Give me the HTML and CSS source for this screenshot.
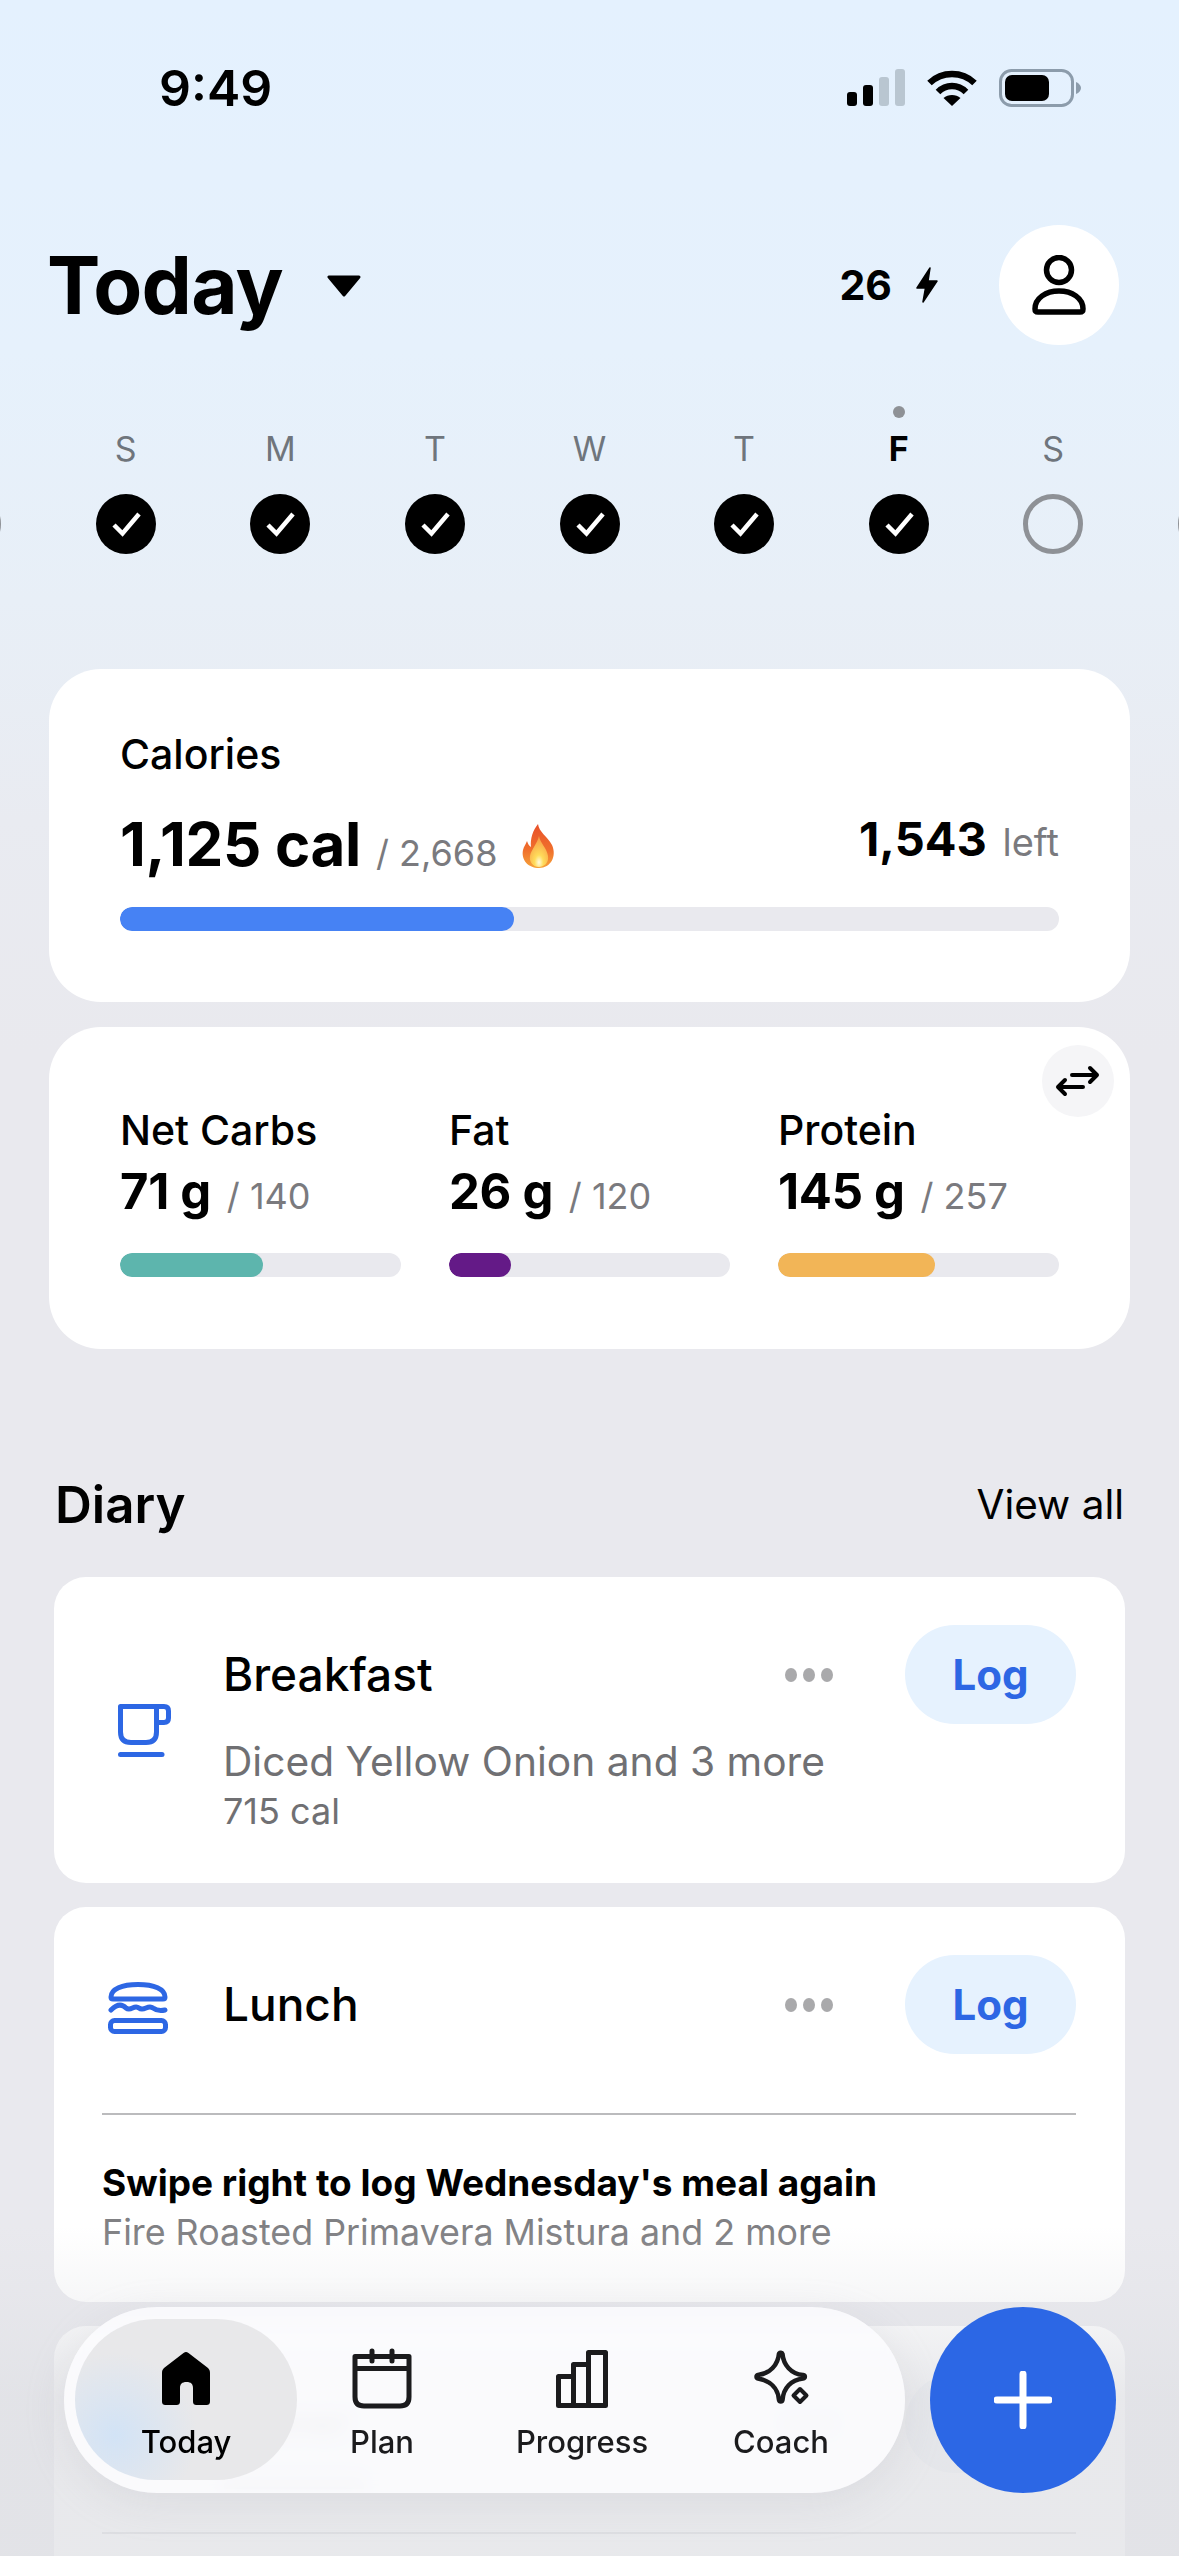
FILE: index.html
```html
<!DOCTYPE html>
<html lang="en">
<head>
    <meta charset="UTF-8">
    <meta name="viewport" content="width=device-width, initial-scale=1.0">
    <title>Today</title>
    <link rel="stylesheet" href="styles.css">
</head>
<body>
    <div class="screen">
        <div class="status">
            <span class="time">9:49</span>
            <div class="status-icons">
                <svg width="58" height="37" viewBox="0 0 58 37">
                    <rect x="0" y="23" width="10" height="14" rx="3" fill="#000"/>
                    <rect x="16" y="16" width="10" height="21" rx="3" fill="#000"/>
                    <rect x="32" y="8" width="10" height="29" rx="3" fill="#b9c6d1"/>
                    <rect x="48" y="0" width="10" height="37" rx="3" fill="#b9c6d1"/>
                </svg>
                <svg width="50" height="37" viewBox="0 0 50 37">
                    <path d="M2.500 14C15 2 35 2 47.500 14" fill="none" stroke="#000" stroke-width="6.500"/>
                    <path d="M11 23C19 15 31 15 39 23" fill="none" stroke="#000" stroke-width="6.500"/>
                    <path d="M25 37L16.500 29C21 25 29 25 33.500 29Z" fill="#000"/>
                </svg>
                <svg width="82" height="38" viewBox="0 0 82 38">
                    <rect x="1.500" y="1.500" width="72" height="35" rx="11" fill="none" stroke="#8c9cab" stroke-width="3"/>
                    <rect x="6" y="6" width="44" height="26" rx="7" fill="#000"/>
                    <path d="M77 13C80 14 82 17 82 19C82 21 80 24 77 25Z" fill="#8c9cab"/>
                </svg>
            </div>
        </div>

        <div class="header">
            <h1>Today</h1>
            <svg class="caret" width="36" height="22" viewBox="0 0 36 22">
                <path d="M3 2H33L18 20Z" fill="#000" stroke="#000" stroke-width="3" stroke-linejoin="round"/>
            </svg>
            <div class="streak">
                <span>26</span>
                <svg width="24" height="36" viewBox="0 0 24 36">
                    <path d="M15 1L2 21H10.500L8 35L22 14H13Z" fill="#000" stroke="#000" stroke-width="1.500" stroke-linejoin="round"/>
                </svg>
            </div>
            <div class="avatar">
                <svg width="54" height="60" viewBox="0 0 54 60">
                    <circle cx="27" cy="15" r="12.500" fill="none" stroke="#000" stroke-width="5.500"/>
                    <path d="M6 57H48C50 57 51 56 51 54C51 43 40 36 27 36C14 36 3 43 3 54C3 56 4 57 6 57Z" fill="none" stroke="#000" stroke-width="5.500"/>
                </svg>
            </div>
        </div>

        <div class="week">
            <div class="day"><span class="today-dot off"></span><span class="day-name off">S</span><span class="day-check"></span></div>
            <div class="day"><span class="today-dot off"></span><span class="day-name">S</span><span class="day-check done"><svg width="60" height="60" viewBox="0 0 60 60"><path d="M18 31L26.500 39.500L43 20" fill="none" stroke="#fff" stroke-width="4.500"/></svg></span></div>
            <div class="day"><span class="today-dot off"></span><span class="day-name">M</span><span class="day-check done"><svg width="60" height="60" viewBox="0 0 60 60"><path d="M18 31L26.500 39.500L43 20" fill="none" stroke="#fff" stroke-width="4.500"/></svg></span></div>
            <div class="day"><span class="today-dot off"></span><span class="day-name">T</span><span class="day-check done"><svg width="60" height="60" viewBox="0 0 60 60"><path d="M18 31L26.500 39.500L43 20" fill="none" stroke="#fff" stroke-width="4.500"/></svg></span></div>
            <div class="day"><span class="today-dot off"></span><span class="day-name">W</span><span class="day-check done"><svg width="60" height="60" viewBox="0 0 60 60"><path d="M18 31L26.500 39.500L43 20" fill="none" stroke="#fff" stroke-width="4.500"/></svg></span></div>
            <div class="day"><span class="today-dot off"></span><span class="day-name">T</span><span class="day-check done"><svg width="60" height="60" viewBox="0 0 60 60"><path d="M18 31L26.500 39.500L43 20" fill="none" stroke="#fff" stroke-width="4.500"/></svg></span></div>
            <div class="day"><span class="today-dot"></span><span class="day-name current">F</span><span class="day-check done"><svg width="60" height="60" viewBox="0 0 60 60"><path d="M18 31L26.500 39.500L43 20" fill="none" stroke="#fff" stroke-width="4.500"/></svg></span></div>
            <div class="day"><span class="today-dot off"></span><span class="day-name">S</span><span class="day-check"></span></div>
            <div class="day"><span class="today-dot off"></span><span class="day-name off">S</span><span class="day-check"></span></div>
        </div>

        <div class="card calories">
            <div class="card-label">Calories</div>
            <div class="cal-row">
                <div class="cal-main">
                    <span class="cal-value">1,125 cal</span>
                    <span class="of">/ 2,668</span>
                    <svg class="flame" width="36" height="44" viewBox="0 0 34 44">
                        <defs>
                            <linearGradient id="flameOuter" x1="0" y1="0" x2="0" y2="1">
                                <stop offset="0" stop-color="#e8502a"/>
                                <stop offset="0.6" stop-color="#f0702c"/>
                                <stop offset="1" stop-color="#f6a33a"/>
                            </linearGradient>
                            <radialGradient id="flameInner" cx="0.5" cy="0.85" r="0.8">
                                <stop offset="0" stop-color="#fffbe0"/>
                                <stop offset="0.3" stop-color="#ffdc5a"/>
                                <stop offset="1" stop-color="#f79a45"/>
                            </radialGradient>
                        </defs>
                        <path d="M16 0C17 8 25 12 30 21C35 32 29 44 17 44C6 44 -1 36 1 26C2 22 4 20 5 17C6 20 7 22 9 23C8 15 11 6 16 0Z" fill="url(#flameOuter)"/>
                        <path d="M17 12C18 19 25 24 26 32C27 39 22 43 17 43C11 43 7 38 8 32C9 26 15 20 17 12Z" fill="url(#flameInner)"/>
                    </svg>
                </div>
                <div class="cal-left"><span class="left-value">1,543</span> <span class="of">left</span></div>
            </div>
            <div class="bar"><div class="fill fill-blue" style="width: 42%"></div></div>
        </div>

        <div class="card macros">
            <div class="swap">
                <svg width="72" height="72" viewBox="0 0 72 72">
                    <path d="M30 30H55M48 23L55 30L48 37" fill="none" stroke="#000" stroke-width="4" stroke-linecap="round" stroke-linejoin="round"/>
                    <path d="M41 42H16M23 35L16 42L23 49" fill="none" stroke="#000" stroke-width="4" stroke-linecap="round" stroke-linejoin="round"/>
                </svg>
            </div>
            <div class="macro">
                <div class="card-label">Net Carbs</div>
                <div class="macro-value"><b>71 g</b> <span class="of">/ 140</span></div>
                <div class="bar"><div class="fill fill-teal" style="width: 51%"></div></div>
            </div>
            <div class="macro">
                <div class="card-label">Fat</div>
                <div class="macro-value"><b>26 g</b> <span class="of">/ 120</span></div>
                <div class="bar"><div class="fill fill-purple" style="width: 22%"></div></div>
            </div>
            <div class="macro">
                <div class="card-label">Protein</div>
                <div class="macro-value"><b>145 g</b> <span class="of">/ 257</span></div>
                <div class="bar"><div class="fill fill-orange" style="width: 56%"></div></div>
            </div>
        </div>

        <div class="diary-head">
            <h2>Diary</h2>
            <span class="view-all">View all</span>
        </div>

        <div class="meal breakfast">
            <div class="meal-icon">
                <svg class="cup" width="53" height="53" viewBox="0 0 53 53">
                    <path d="M2.500 2.500H38.500V28C38.500 35 35 38.500 28 38.500H13C6 38.500 2.500 35 2.500 28Z" fill="none" stroke="#2d67e4" stroke-width="5" stroke-linejoin="round"/>
                    <path d="M38 2.500H46C49 2.500 50.500 4 50.500 7V14C50.500 17 49 18.500 46 18.500H38.500" fill="none" stroke="#2d67e4" stroke-width="5"/>
                    <path d="M2.500 50.500H44" fill="none" stroke="#2d67e4" stroke-width="5" stroke-linecap="round"/>
                </svg>
            </div>
            <div class="meal-body">
                <div class="meal-row">
                    <span class="meal-name">Breakfast</span>
                    <span class="more"><i></i><i></i><i></i></span>
                    <span class="log">Log</span>
                </div>
                <div class="meal-desc">Diced Yellow Onion and 3 more</div>
                <div class="meal-cal">715 cal</div>
            </div>
        </div>

        <div class="meal lunch">
            <div class="meal-top">
                <div class="meal-icon">
                    <svg class="burger" width="60" height="52" viewBox="0 0 60 52">
                        <path d="M5 17C3.500 17 3 16 3 15C3 7 14 2.500 30 2.500C46 2.500 57 7 57 15C57 16 56.500 17 55 17Z" fill="none" stroke="#2d67e4" stroke-width="5" stroke-linejoin="round"/>
                        <path d="M3 28C9 22 14 22 18 26C23 30 26 22 31 26C36 30 40 22 45 26C49 29 53 29 57 28" fill="none" stroke="#2d67e4" stroke-width="5" stroke-linecap="round"/>
                        <rect x="2.500" y="38.500" width="55" height="11" rx="4" fill="none" stroke="#2d67e4" stroke-width="5"/>
                    </svg>
                </div>
                <div class="meal-row">
                    <span class="meal-name">Lunch</span>
                    <span class="more"><i></i><i></i><i></i></span>
                    <span class="log">Log</span>
                </div>
            </div>
            <div class="meal-divider"></div>
            <div class="swipe-title">Swipe right to log Wednesday's meal again</div>
            <div class="swipe-desc">Fire Roasted Primavera Mistura and 2 more</div>
        </div>

        <div class="meal dinner">
            <div class="meal-top">
                <div class="meal-icon"><span class="dinner-icon"></span></div>
                <div class="meal-row">
                    <span class="meal-name">Dinner</span>
                    <span class="more"><i></i><i></i><i></i></span>
                    <span class="log">Log</span>
                </div>
            </div>
            <div class="dinner-line"></div>
            <div class="meal-divider"></div>
        </div>

        <div class="fade"></div>

        <div class="tabbar">
            <div class="tab active">
                <svg width="60" height="60" viewBox="0 0 60 60">
                    <path d="M27.500 5L8 20C6.500 21.500 6 23 6 25V53C6 56 7 57 10 57H20C23 57 24 56 24 53V40C24 36 26 34 30.500 34C35 34 37 36 37 40V53C37 56 38 57 41 57H50C53 57 54 56 54 53V25C54 23 53.500 21.500 52 20L32.500 5C30.500 3.500 29.500 3.500 27.500 5Z" fill="#000"/>
                </svg>
                <span>Today</span>
            </div>
            <div class="tab">
                <svg width="60" height="60" viewBox="0 0 60 60">
                    <path d="M3 8.500H57V49C57 55 54 58 48 58H12C6 58 3 55 3 49ZM3 20.500H57" fill="none" stroke="#1b1b1d" stroke-width="5" stroke-linejoin="round"/>
                    <path d="M20 3V13M40 3V13" fill="none" stroke="#1b1b1d" stroke-width="5" stroke-linecap="round"/>
                </svg>
                <span>Plan</span>
            </div>
            <div class="tab">
                <svg width="60" height="60" viewBox="0 0 60 60">
                    <path d="M6.500 28.500H21.500V57.500H6.500ZM21.500 16.500H36.500V57.500H21.500ZM36.500 4.500H53.500V57.500H36.500Z" fill="none" stroke="#1b1b1d" stroke-width="5" stroke-linejoin="round"/>
                </svg>
                <span>Progress</span>
            </div>
            <div class="tab">
                <svg width="60" height="60" viewBox="0 0 60 60">
                    <path d="M28 5.500C29 4.500 31 4.500 31.500 6C32.500 17 40 26 52 27C54.500 27.500 54.500 30 52 30.500C40 32 32.500 40 31.500 52C31 54 28.500 54 28 52C27 40 19 32.500 7 30.500C5 30 5 27.500 7 27C19 25.500 27 17 28 5.500Z" fill="none" stroke="#1b1b1d" stroke-width="4.500" stroke-linejoin="round"/>
                    <path d="M49 41L55.500 47.500L49 54L42.500 47.500Z" fill="none" stroke="#1b1b1d" stroke-width="4" stroke-linejoin="round"/>
                </svg>
                <span>Coach</span>
            </div>
        </div>
        <div class="add">
            <svg width="58" height="58" viewBox="0 0 58 58">
                <path d="M29 3V55M3 29H55" fill="none" stroke="#fff" stroke-width="7" stroke-linecap="round"/>
            </svg>
        </div>
    </div>
</body>
</html>
```

FILE: styles.css
```css
* {
    box-sizing: border-box;
}
body {
    margin: 0;
    font-family: Inter, "Noto Sans", sans-serif;
    color: #000;
}
.screen {
    position: relative;
    width: 1179px;
    height: 2556px;
    overflow: hidden;
    background: linear-gradient(180deg, #e4f1fe 0, #e6f1fc 350px, #e8eff7 600px, #e9ebf1 820px, #e9e9ee 1050px);
}

/* status bar */
.status {
    display: flex;
    align-items: center;
    justify-content: space-between;
    height: 175px;
    padding: 0 98px 0 159px;
}
.time {
    font-size: 50px;
    font-weight: 600;
}
.status-icons {
    display: flex;
    align-items: center;
    gap: 22px;
}

/* header */
.header {
    display: flex;
    align-items: center;
    height: 120px;
    margin-top: 50px;
    padding: 0 60px 0 47px;
}
h1 {
    margin: 0;
    font-size: 80px;
    line-height: 96px;
    font-weight: 700;
    letter-spacing: -0.8px;
}
.caret {
    margin-left: 43px;
    margin-top: 2px;
}
.streak {
    display: flex;
    align-items: center;
    gap: 23px;
    margin-left: auto;
    margin-right: 60px;
    font-size: 41px;
    font-weight: 700;
}
.avatar {
    display: flex;
    align-items: center;
    justify-content: center;
    width: 120px;
    height: 120px;
    border-radius: 50%;
    background: #fff;
}

/* week strip */
.week {
    display: flex;
    justify-content: center;
    margin-top: 61px;
    overflow: hidden;
}
.day {
    flex: 0 0 154.6px;
    display: flex;
    flex-direction: column;
    align-items: center;
}
.today-dot {
    width: 12px;
    height: 12px;
    border-radius: 50%;
    background: #8e9196;
}
.off {
    visibility: hidden;
}
.day-name {
    margin-top: 11px;
    font-size: 34px;
    line-height: 40px;
    color: #6f757c;
}
.day-name.current {
    color: #000;
    font-weight: 700;
}
.day-check {
    width: 60px;
    height: 60px;
    margin-top: 25px;
    border-radius: 50%;
    border: 5px solid #8e9196;
}
.day-check.done {
    border: 0;
    background: #000;
}

/* cards */
.card {
    position: relative;
    width: 1081px;
    margin-left: 49px;
    background: #fff;
    border-radius: 52px;
}
.calories {
    margin-top: 115px;
    padding: 61px 71px 71px;
}
.card-label {
    font-size: 41px;
    line-height: 48px;
    font-weight: 500;
}
.cal-row {
    display: flex;
    justify-content: space-between;
    align-items: flex-start;
    margin-top: 31px;
    height: 70px;
}
.cal-main {
    display: flex;
    align-items: baseline;
    line-height: 70px;
}
.cal-value {
    font-size: 60px;
    font-weight: 700;
    letter-spacing: -0.3px;
}
.of {
    font-size: 36px;
    line-height: 1;
    color: #7a7a7e;
}
.cal-main .of {
    margin-left: 15px;
}
.flame {
    align-self: center;
    margin-left: 24px;
    margin-top: 3px;
}
.cal-left {
    line-height: 60px;
}
.left-value {
    font-size: 47px;
    font-weight: 700;
}
.cal-left .of {
    margin-left: 11px;
    font-size: 38px;
}
.bar {
    height: 24px;
    border-radius: 12px;
    background: #e9e9ee;
    overflow: hidden;
}
.calories .bar {
    margin-top: 28px;
}
.fill {
    height: 100%;
    border-radius: 12px;
}
.fill-blue {
    background: #4682f4;
}
.fill-teal {
    background: #5db5ad;
}
.fill-purple {
    background: #641a87;
}
.fill-orange {
    background: #f2b557;
}
.macros {
    display: grid;
    grid-template-columns: repeat(3, 281px);
    column-gap: 48px;
    margin-top: 25px;
    padding: 79px 71px 72px;
}
.swap {
    position: absolute;
    top: 18px;
    right: 16px;
    width: 72px;
    height: 72px;
    border-radius: 50%;
    background: #f5f5f7;
}
.macro-value {
    margin-top: 10px;
    line-height: 56px;
    font-size: 49px;
    white-space: nowrap;
}
.macro-value b {
    font-weight: 700;
    letter-spacing: -0.3px;
}
.macro-value .of {
    margin-left: 2px;
}
.macro .bar {
    margin-top: 33px;
}

/* diary */
.diary-head {
    display: flex;
    align-items: center;
    justify-content: space-between;
    height: 60px;
    margin-top: 125px;
    padding: 0 55px 0 55px;
}
h2 {
    margin: 0;
    font-size: 51px;
    font-weight: 600;
}
.view-all {
    font-size: 40.5px;
}
.meal {
    width: 1071px;
    margin: 24px 0 0 54px;
    padding: 48px 49px 0 48px;
    background: #fff;
    border-radius: 32px;
}
.breakfast {
    display: flex;
    align-items: center;
    margin-top: 43px;
    height: 306px;
}
.breakfast .meal-icon {
    margin-top: -48px;
}
.meal-icon {
    flex: 0 0 121px;
}
.cup {
    display: block;
    margin-left: 16px;
}
.burger {
    display: block;
    margin: 6px 0 0 6px;
}
.meal-body {
    flex: 1;
    align-self: flex-start;
}
.meal-top {
    display: flex;
    align-items: center;
}
.meal-row {
    flex: 1;
    display: flex;
    align-items: center;
    height: 99px;
}
.meal-name {
    font-size: 46px;
    line-height: 50px;
    font-weight: 500;
    margin-top: -2px;
}
.more {
    display: flex;
    gap: 6px;
    margin-left: auto;
    margin-right: 72px;
}
.more i {
    width: 12px;
    height: 14px;
    border-radius: 50%;
    background: #a9a9ab;
}
.log {
    display: flex;
    align-items: center;
    justify-content: center;
    width: 171px;
    height: 99px;
    border-radius: 50px;
    background: #e6f2fe;
    color: #2d67e4;
    font-size: 42px;
    font-weight: 700;
}
.meal-desc {
    margin-top: 13px;
    font-size: 40.7px;
    line-height: 50px;
    color: #707073;
}
.meal-cal {
    margin-top: 4px;
    font-size: 36px;
    line-height: 40px;
    color: #707073;
}
.meal-divider {
    height: 2px;
    margin-top: 59px;
    background: #bbbbbd;
}
.swipe-title {
    margin-top: 46px;
    font-size: 37px;
    line-height: 44px;
    font-weight: 700;
    white-space: nowrap;
}
.swipe-desc {
    margin-top: 5px;
    padding-bottom: 48px;
    font-size: 35.8px;
    line-height: 44px;
    color: #808083;
    white-space: nowrap;
}
.dinner {
    padding-bottom: 80px;
}
.dinner .meal-name {
    margin-left: 9px;
    font-size: 37px;
}
.dinner-icon {
    display: block;
    width: 60px;
    height: 60px;
    margin: 10px 0 0 6px;
    border-radius: 30px;
    background: #5b94ea;
}
.dinner .log {
    background: #f1f4f8;
}
.dinner-line {
    width: 140px;
    height: 12px;
    margin: 4px 0 0 122px;
    background: #a5a5a8;
}
.dinner .meal-divider {
    margin-top: 43px;
    background: #d4d4d8;
}

/* bottom overlays */
.fade {
    position: absolute;
    left: 0;
    right: 0;
    bottom: 0;
    height: 330px;
    background: linear-gradient(180deg, rgba(224, 225, 229, 0) 0, rgba(224, 225, 229, 0.26) 70px, rgba(224, 225, 229, 0.74) 170px);
}
.tabbar {
    position: absolute;
    left: 64px;
    top: 2307px;
    display: grid;
    grid-template-columns: 222px 170px 230px 168px;
    width: 841px;
    height: 186px;
    padding: 12px 11px;
    border-radius: 93px;
    background: rgba(252, 252, 254, 0.88);
    box-shadow: 0 10px 40px rgba(170, 172, 180, 0.2);
    -webkit-backdrop-filter: blur(8px);
    backdrop-filter: blur(8px);
}
.tab {
    display: flex;
    flex-direction: column;
    align-items: center;
    padding-top: 29px;
    font-size: 31px;
    line-height: 36px;
    font-weight: 500;
    color: #1b1b1d;
}
.tab svg {
    display: block;
    margin-bottom: 16px;
    overflow: visible;
}
.tab.active {
    height: 161px;
    border-radius: 81px;
    color: #000;
    background: radial-gradient(circle at 18% 72%, #d2e3f6 0, rgba(210, 227, 246, 0) 38%), #e8e8ea;
}
.add {
    position: absolute;
    left: 930px;
    top: 2307px;
    display: flex;
    align-items: center;
    justify-content: center;
    width: 186px;
    height: 186px;
    border-radius: 50%;
    background: #2c67e5;
}
```
